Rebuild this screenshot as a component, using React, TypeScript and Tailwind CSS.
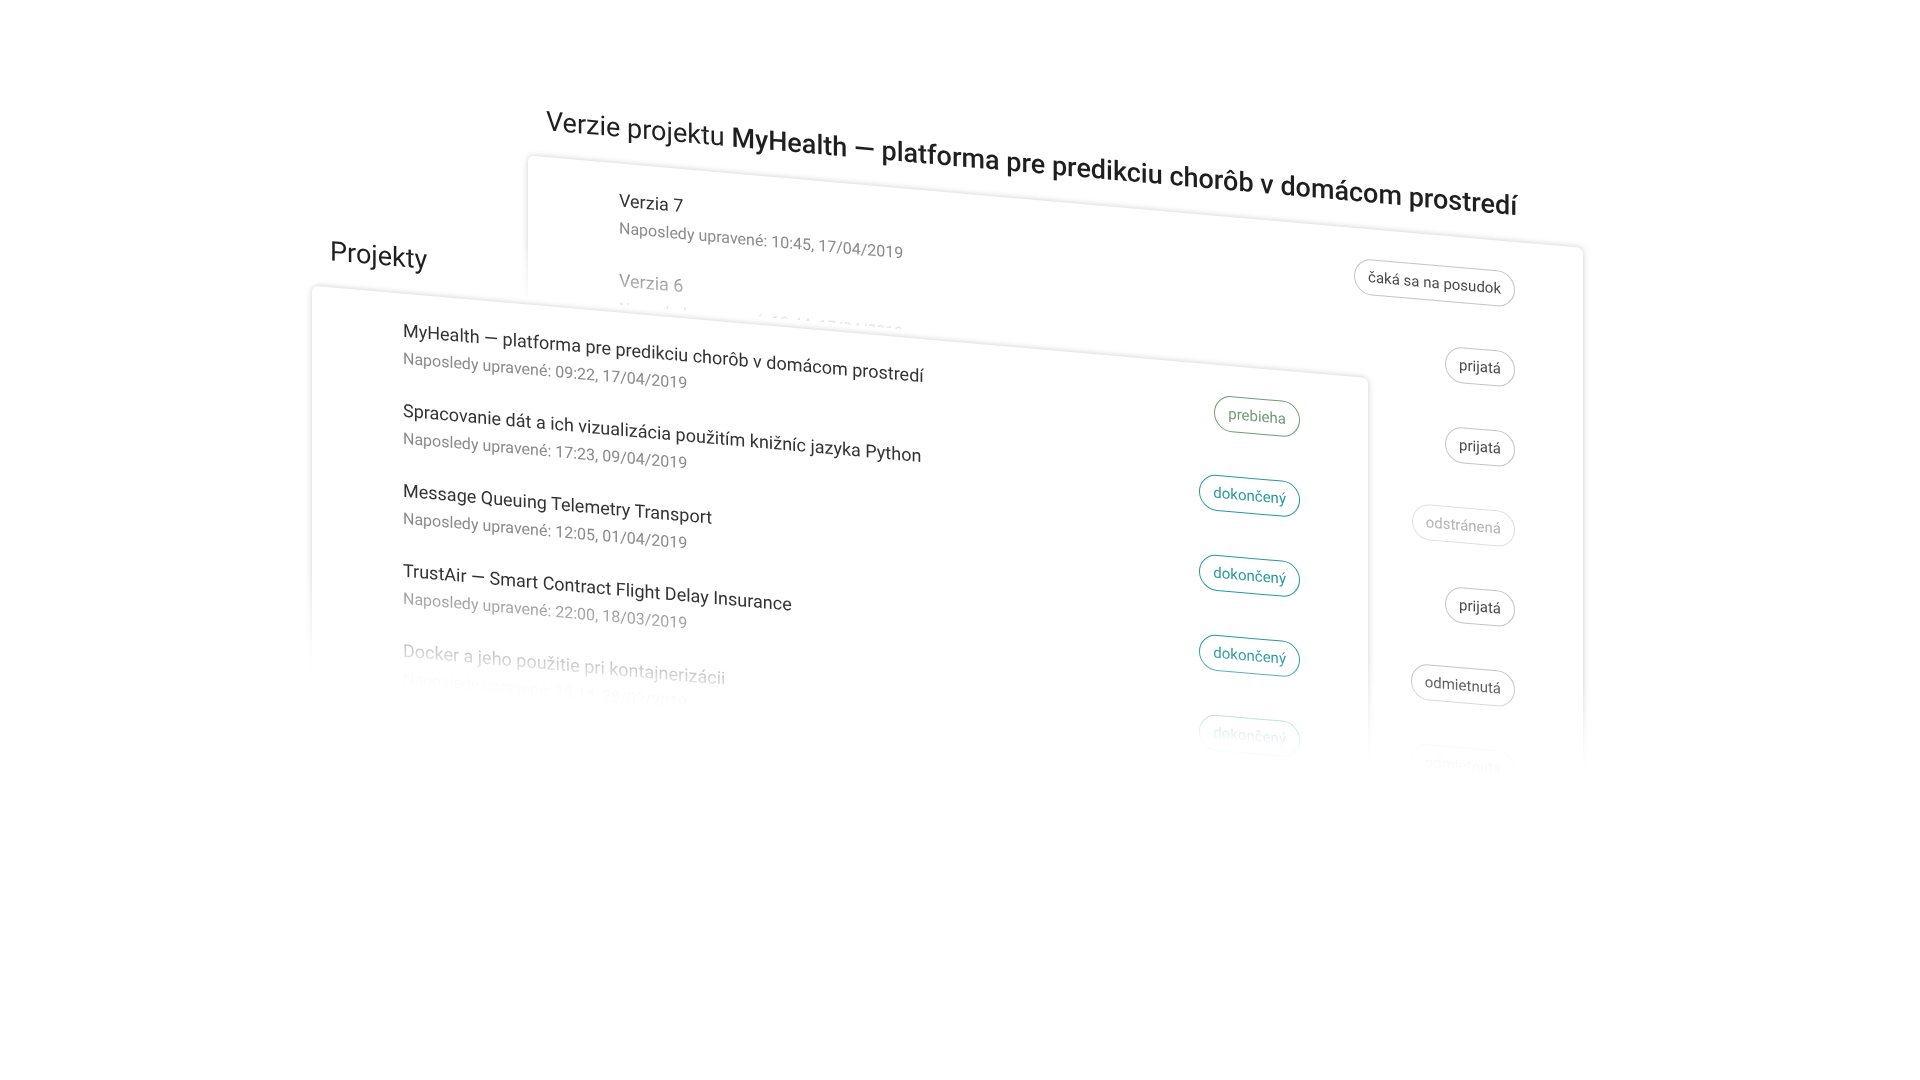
type Row = { title: string; meta: string; status: string; tone: string };

const TEAL = 'border-[#26999e] text-[#26999e]';
const GREEN = 'border-[#6f9c74] text-[#6f9c74]';
const GRAY = 'border-[#c4c4c4] text-[#4a4a4a]';
const MUTED = 'border-[#e0e0e0] text-[#b4b4b4]';

const projects: Row[] = [
  { title: 'MyHealth — platforma pre predikciu chorôb v domácom prostredí', meta: '09:22, 17/04/2019', status: 'prebieha', tone: GREEN },
  { title: 'Spracovanie dát a ich vizualizácia použitím knižníc jazyka Python', meta: '17:23, 09/04/2019', status: 'dokončený', tone: TEAL },
  { title: 'Message Queuing Telemetry Transport', meta: '12:05, 01/04/2019', status: 'dokončený', tone: TEAL },
  { title: 'TrustAir — Smart Contract Flight Delay Insurance', meta: '22:00, 18/03/2019', status: 'dokončený', tone: TEAL },
  { title: 'Docker a jeho použitie pri kontajnerizácii', meta: '19:14, 28/02/2019', status: 'dokončený', tone: TEAL },
];

const versions: Row[] = [
  { title: 'Verzia 7', meta: '10:45, 17/04/2019', status: 'čaká sa na posudok', tone: GRAY },
  { title: 'Verzia 6', meta: '10:44, 17/04/2019', status: 'prijatá', tone: GRAY },
  { title: '', meta: '', status: 'prijatá', tone: GRAY },
  { title: '', meta: '', status: 'odstránená', tone: MUTED },
  { title: '', meta: '', status: 'prijatá', tone: GRAY },
  { title: '', meta: '', status: 'odmietnutá', tone: GRAY },
  { title: '', meta: '', status: 'odmietnutá', tone: GRAY },
];

function List({ rows }: { rows: Row[] }) {
  return (
    <ul className="rounded-md bg-white pt-2 pr-[68px] pl-[91px] shadow-[0_0_6px_rgba(0,0,0,0.2)]">
      {rows.map((row, i) => (
        <li key={i} className="flex h-20 items-center justify-between">
          <div className="pt-1.5">
            {row.title && (
              <>
                <h2 className="text-lg leading-7 text-[#333]">{row.title}</h2>
                <p className="text-base leading-7 text-[#8a8a8a]">Naposledy upravené: {row.meta}</p>
              </>
            )}
          </div>
          <span className={`rounded-full border px-[13px] text-[15px] leading-[34px] ${row.tone}`}>{row.status}</span>
        </li>
      ))}
    </ul>
  );
}

export default function App() {
  return (
    <main className="min-h-screen overflow-hidden bg-white pt-[74px] pr-[329px] pl-[304px] font-['Roboto',sans-serif]">
      <div className="grid origin-top-left skew-y-[5deg] items-start">
        <section className="col-start-1 row-start-1 ml-[216px] mask-[linear-gradient(to_bottom,#000_500px,rgba(0,0,0,0.06)_574px,transparent_602px)] px-2">
          <h1 className="px-[18px] pb-[10px] text-[27px] leading-[52px] text-[#1f1f1f]">
            Verzie projektu <strong className="font-medium">MyHealth — platforma pre predikciu chorôb v domácom prostredí</strong>
          </h1>
          <List rows={versions} />
        </section>
        <div className="z-10 col-start-1 row-start-1 mt-[149px] mr-[215px] bg-[linear-gradient(to_bottom,transparent,rgba(255,255,255,0.55)_28px,rgba(255,255,255,0.8)_54px,#fff_54px)] pb-[140px]">
          <section className="mask-[linear-gradient(to_bottom,#000_345px,rgba(0,0,0,0.3)_412px,rgba(0,0,0,0.05)_436px,transparent_460px)] px-2">
            <h1 className="px-[18px] pb-[10px] text-[27px] leading-[52px] text-[#1f1f1f]">Projekty</h1>
            <List rows={projects} />
          </section>
        </div>
      </div>
    </main>
  );
}
